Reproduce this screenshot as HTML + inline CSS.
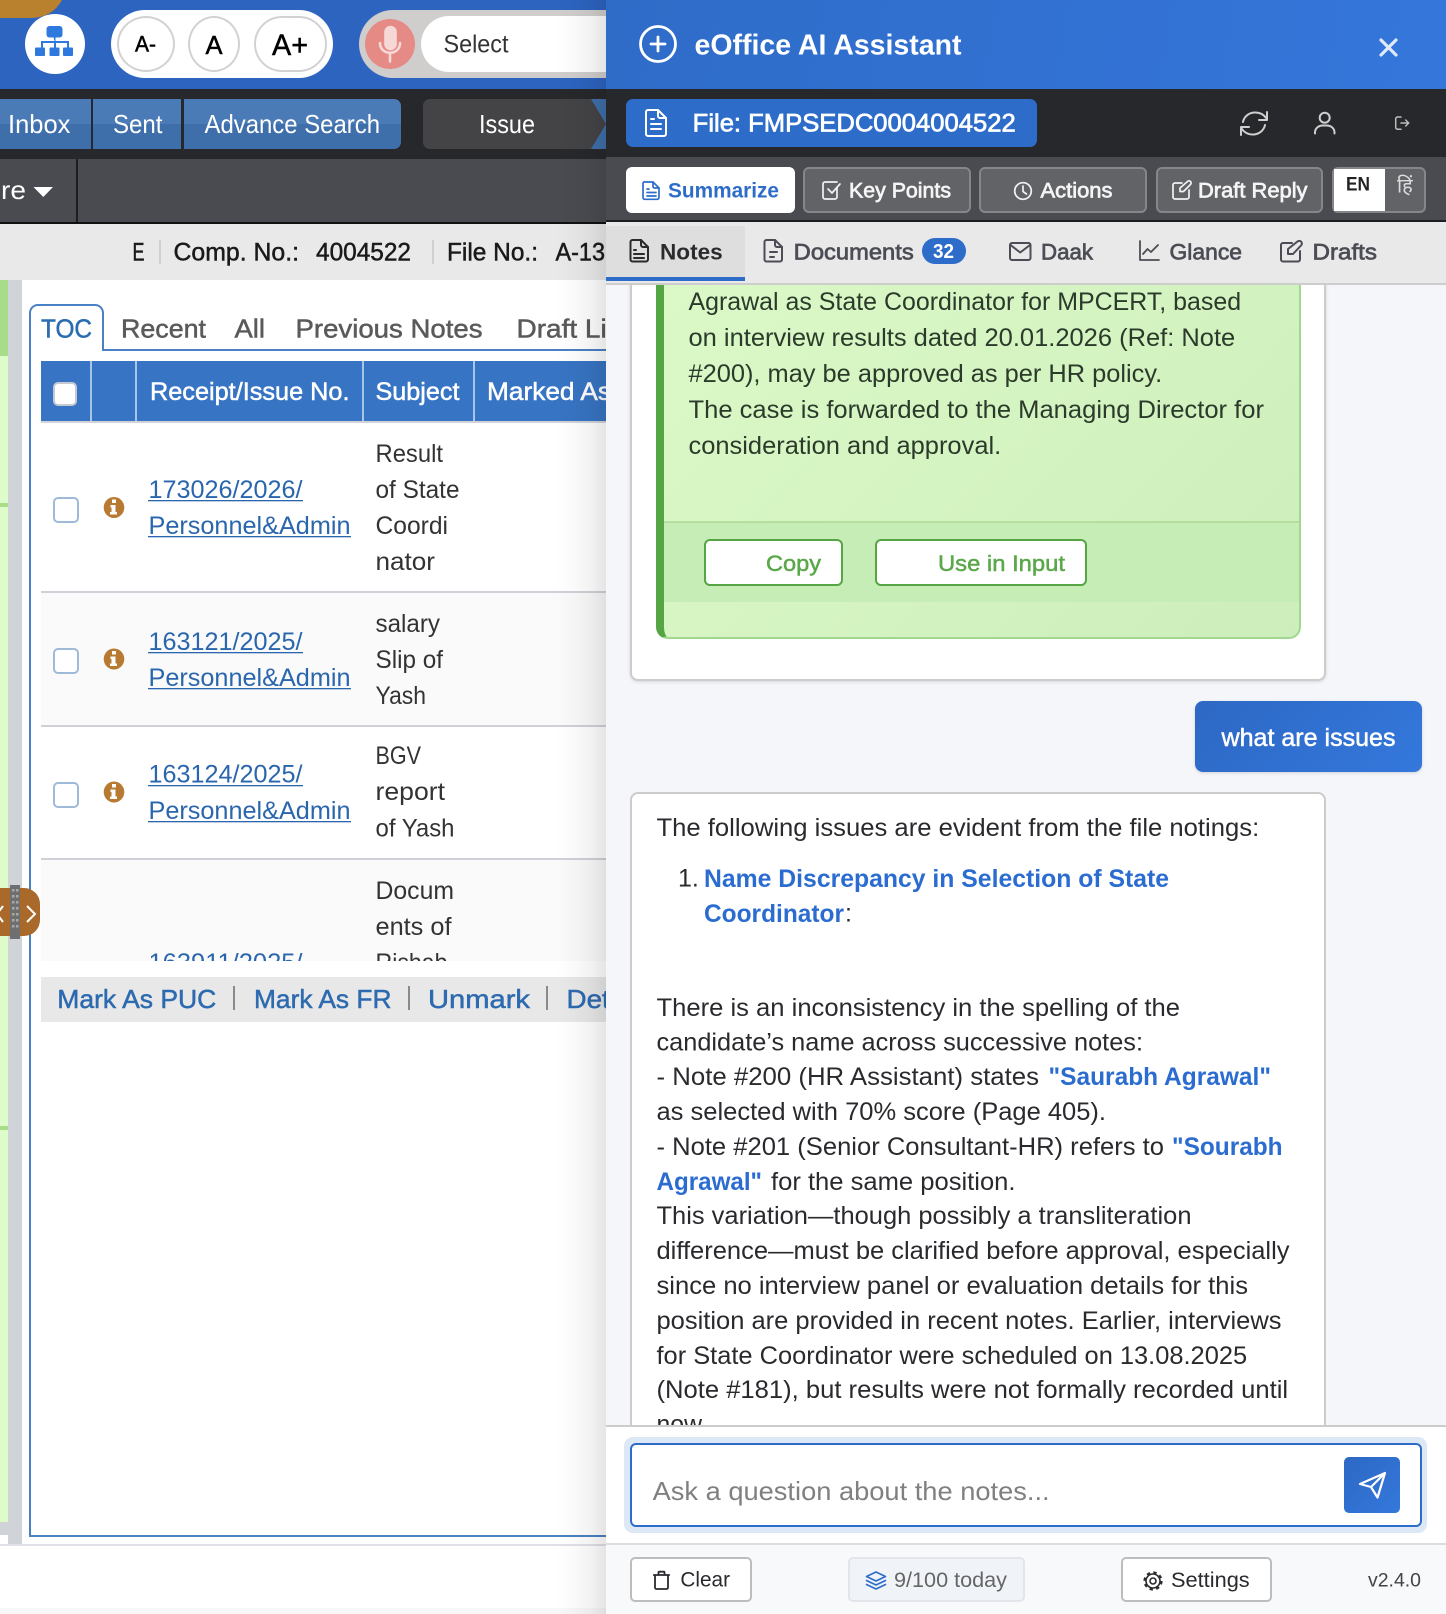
<!DOCTYPE html>
<html lang="en"><head><meta charset="utf-8"><title>eOffice AI Assistant</title>
<style>
html,body{margin:0;padding:0;width:1446px;height:1614px;overflow:hidden;background:#fff}
body{position:relative;font-family:"Liberation Sans",sans-serif}
.a{position:absolute;box-sizing:border-box}
svg.a{overflow:hidden}
text{font-family:"Liberation Sans","Noto Sans CJK SC",sans-serif;white-space:pre}
.m{stroke-width:.5px}
.ic{fill:none;stroke-linecap:round;stroke-linejoin:round}
.cb{width:26px;height:26px;left:53px;border:2px solid #9fbad8;border-radius:5px;background:#fff}
.btn{top:167px;height:46px;border:2px solid #85868a;border-radius:6px;background:#626367}
.fbtn{top:1557px;height:45px;border:2px solid #bdbdbd;border-radius:5px;background:#fff}
</style></head><body>

<!-- LEFT PAGE -->
<div class="a" style="left:0;top:0;width:606px;height:89px;background:#2c64c0"></div>
<div class="a" style="left:25px;top:14px;width:60px;height:60px;border-radius:50%;background:#fff"></div>
<div class="a" style="left:111px;top:10px;width:222px;height:68px;border-radius:34px;background:#fff"></div>
<div class="a" style="left:117px;top:16px;width:58px;height:56px;border-radius:50%;border:2px solid #d2d2d2"></div>
<div class="a" style="left:188px;top:16px;width:52px;height:56px;border-radius:50%;border:2px solid #d2d2d2"></div>
<div class="a" style="left:254px;top:16px;width:73px;height:56px;border-radius:28px;border:2px solid #d2d2d2"></div>
<div class="a" style="left:359px;top:10px;width:300px;height:68px;border-radius:34px;background:#d0cdcd"></div>
<div class="a" style="left:365px;top:19px;width:50px;height:50px;border-radius:50%;background:#e58a84"></div>
<div class="a" style="left:421px;top:16px;width:250px;height:56px;border-radius:28px;background:#fff"></div>

<div class="a" style="left:0;top:89px;width:606px;height:70px;background:#27282b"></div>
<div class="a" style="left:0;top:99px;width:91px;height:50px;background:linear-gradient(#4a7bb6 50%,#3f6fab 50%)"></div>
<div class="a" style="left:93px;top:99px;width:88px;height:50px;background:linear-gradient(#4a7bb6 50%,#3f6fab 50%)"></div>
<div class="a" style="left:184px;top:99px;width:217px;height:50px;border-radius:0 7px 7px 0;background:linear-gradient(#4a7bb6 50%,#3f6fab 50%)"></div>
<div class="a" style="left:591px;top:99px;width:15px;height:50px;background:#3f6fab"></div>
<div class="a" style="left:423px;top:99px;width:183px;height:50px;border-radius:7px 0 0 7px;background:#444446;clip-path:polygon(0 0,168px 0,183px 25px,168px 50px,0 50px)"></div>

<div class="a" style="left:0;top:159px;width:606px;height:63px;background:#4a4b50"></div>
<div class="a" style="left:76px;top:159px;width:2px;height:63px;background:#1d1e21"></div>
<div class="a" style="left:0;top:222px;width:606px;height:2px;background:#111"></div>
<div class="a" style="left:0;top:224px;width:606px;height:56px;background:#e9e9e9"></div>
<div class="a" style="left:159px;top:240px;width:2px;height:24px;background:#cfcfcf"></div>
<div class="a" style="left:432px;top:240px;width:2px;height:24px;background:#cfcfcf"></div>

<div class="a" style="left:0;top:280px;width:8px;height:76px;background:#a8dc88"></div>
<div class="a" style="left:0;top:356px;width:8px;height:1166px;background:#defcc9"></div>
<div class="a" style="left:0;top:503px;width:8px;height:4px;background:#a8dc88"></div>
<div class="a" style="left:0;top:1126px;width:8px;height:4px;background:#a8dc88"></div>
<div class="a" style="left:0;top:1522px;width:8px;height:13px;background:#d0d3d8"></div>
<div class="a" style="left:8px;top:280px;width:14px;height:1264px;background:#d0d3d8"></div>

<div class="a" style="left:29px;top:349px;width:2px;height:1188px;background:#4a80c4"></div>
<div class="a" style="left:29px;top:1535px;width:577px;height:2px;background:#4a80c4"></div>
<div class="a" style="left:100px;top:349px;width:506px;height:2px;background:#4a80c4"></div>
<div class="a" style="left:29px;top:304px;width:75px;height:47px;border:2px solid #4a80c4;border-bottom:0;border-radius:9px 9px 0 0;background:#fff"></div>

<div class="a" style="left:41px;top:361px;width:565px;height:60px;background:#3774c3"></div>
<div class="a" style="left:90px;top:361px;width:2px;height:60px;background:#a8c4e6"></div>
<div class="a" style="left:135px;top:361px;width:2px;height:60px;background:#a8c4e6"></div>
<div class="a" style="left:362px;top:361px;width:2px;height:60px;background:#a8c4e6"></div>
<div class="a" style="left:473px;top:361px;width:2px;height:60px;background:#a8c4e6"></div>
<div class="a" style="left:41px;top:421px;width:565px;height:2px;background:#d0d3d8"></div>
<div class="a" style="left:53px;top:382px;width:24px;height:24px;background:#fff;border:2px solid #c4c9d2;border-radius:5px"></div>

<div class="a" style="left:41px;top:591px;width:565px;height:2px;background:#d0d0d8"></div>
<div class="a" style="left:41px;top:593px;width:565px;height:132px;background:#fafafa"></div>
<div class="a" style="left:41px;top:725px;width:565px;height:2px;background:#d0d0d8"></div>
<div class="a" style="left:41px;top:858px;width:565px;height:2px;background:#d0d0d8"></div>
<div class="a" style="left:41px;top:860px;width:565px;height:101px;background:#fafafa"></div>
<div class="a cb" style="top:497px"></div>
<div class="a cb" style="top:648px"></div>
<div class="a cb" style="top:782px"></div>

<div class="a" style="left:41px;top:977px;width:565px;height:45px;background:#e8e8e8"></div>
<div class="a" style="left:233px;top:986px;width:2px;height:24px;background:#8a8a8a"></div>
<div class="a" style="left:408px;top:986px;width:2px;height:24px;background:#8a8a8a"></div>
<div class="a" style="left:546px;top:986px;width:2px;height:24px;background:#8a8a8a"></div>

<div class="a" style="left:0;top:1544px;width:606px;height:2px;background:#e0e0e8"></div>
<div class="a" style="left:0;top:1608px;width:606px;height:6px;background:#f8f8f8"></div>

<svg class="a" style="left:0;top:0" width="606" height="1614" viewBox="0 0 606 1614">
<defs><clipPath id="r4"><rect x="0" y="860" width="606" height="101"/></clipPath></defs>
<!-- orange corner -->
<path d="M0 0H62Q52 18 30 18H0Z" fill="#b9812e"/>
<!-- sitemap icon -->
<g fill="#2f78de"><rect x="46.500" y="26" width="16" height="11.500" rx="3"/><rect x="35" y="47.500" width="10" height="8.500" rx="1"/><rect x="49.500" y="47.500" width="10" height="8.500" rx="1"/><rect x="63" y="47.500" width="10" height="8.500" rx="1"/><path d="M53.500 37h2v4h13.500v7h-2v-5h-11v5h-2v-5h-11v5h-2v-7h13.500z"/></g>
<g fill="#000" stroke="#000"><text class="m" x="135" y="51.700" font-size="22" textLength="21" lengthAdjust="spacingAndGlyphs">A-</text><text class="m" x="205.500" y="54" font-size="26" textLength="17" lengthAdjust="spacingAndGlyphs">A</text><text class="m" x="272" y="55" font-size="30" textLength="36" lengthAdjust="spacingAndGlyphs">A+</text></g>
<!-- mic -->
<g class="ic" stroke="#f6d9d7" stroke-width="2.600"><rect x="385.500" y="27" width="10" height="22" rx="5" fill="#f6d9d7"/><path d="M380 43c0 13 20 13 20 0M390 53v8.500"/></g>
<text x="443.500" y="52.700" font-size="25" fill="#333" textLength="65" lengthAdjust="spacingAndGlyphs">Select</text>
<g fill="#fff" font-size="26">
<text x="8" y="133" textLength="62.400" lengthAdjust="spacingAndGlyphs">Inbox</text><text x="113" y="133" textLength="49.500" lengthAdjust="spacingAndGlyphs">Sent</text><text x="204.500" y="133" textLength="175.500" lengthAdjust="spacingAndGlyphs">Advance Search</text><text x="479" y="133" textLength="56" lengthAdjust="spacingAndGlyphs">Issue</text><text x="1" y="199" textLength="25" lengthAdjust="spacingAndGlyphs">re</text>
</g>
<path d="M33.500 187h19.500l-9.700 10z" fill="#fff"/>
<g fill="#1a1a1a" stroke="#1a1a1a" font-size="25">
<text class="m" x="132.500" y="260.700" textLength="12" lengthAdjust="spacingAndGlyphs">E</text><text class="m" x="173.500" y="260.700" textLength="125.500" lengthAdjust="spacingAndGlyphs">Comp. No.:</text><text class="m" x="316" y="260.700" textLength="95" lengthAdjust="spacingAndGlyphs">4004522</text><text class="m" x="447" y="260.700" textLength="91" lengthAdjust="spacingAndGlyphs">File No.:</text><text class="m" x="555.500" y="260.700" textLength="49.500" lengthAdjust="spacingAndGlyphs">A-13</text>
</g>
<g font-size="26" fill="#5a5a5a" stroke="#5a5a5a">
<text class="m" x="41" y="337.700" fill="#2a6db0" stroke="#2a6db0" textLength="51" lengthAdjust="spacingAndGlyphs">TOC</text><text class="m" x="121" y="337.700" textLength="85" lengthAdjust="spacingAndGlyphs">Recent</text><text class="m" x="234.500" y="337.700" textLength="30.500" lengthAdjust="spacingAndGlyphs">All</text><text class="m" x="295.500" y="337.700" textLength="187" lengthAdjust="spacingAndGlyphs">Previous Notes</text><text class="m" x="516.500" y="337.700" textLength="112" lengthAdjust="spacingAndGlyphs">Draft List</text>
</g>
<g font-size="25" fill="#fff" stroke="#fff">
<text class="m" x="150" y="400" textLength="199.500" lengthAdjust="spacingAndGlyphs">Receipt/Issue No.</text><text class="m" x="375.500" y="400" textLength="84" lengthAdjust="spacingAndGlyphs">Subject</text><text class="m" x="487" y="400" textLength="124" lengthAdjust="spacingAndGlyphs">Marked As</text>
</g>
<g font-size="25" fill="#333">
<text x="375.500" y="462" textLength="67.500" lengthAdjust="spacingAndGlyphs">Result</text><text x="375.500" y="498" textLength="84" lengthAdjust="spacingAndGlyphs">of State</text><text x="375.500" y="534" textLength="72.500" lengthAdjust="spacingAndGlyphs">Coordi</text><text x="375.500" y="570" textLength="59.500" lengthAdjust="spacingAndGlyphs">nator</text>
<text x="375.500" y="632" textLength="64.500" lengthAdjust="spacingAndGlyphs">salary</text><text x="375.500" y="668" textLength="67.500" lengthAdjust="spacingAndGlyphs">Slip of</text><text x="375.500" y="704" textLength="50.500" lengthAdjust="spacingAndGlyphs">Yash</text>
<text x="375.500" y="764" textLength="45.500" lengthAdjust="spacingAndGlyphs">BGV</text><text x="375.500" y="800" textLength="69.500" lengthAdjust="spacingAndGlyphs">report</text><text x="375.500" y="836.500" textLength="79" lengthAdjust="spacingAndGlyphs">of Yash</text>
<text x="375.500" y="899" textLength="78.500" lengthAdjust="spacingAndGlyphs">Docum</text><text x="375.500" y="935" textLength="76" lengthAdjust="spacingAndGlyphs">ents of</text>
<g clip-path="url(#r4)"><text x="375.500" y="971" textLength="72" lengthAdjust="spacingAndGlyphs">Rishab</text></g>
</g>
<g font-size="25" fill="#2a66ad">
<text x="148.500" y="498" textLength="154" lengthAdjust="spacingAndGlyphs">173026/2026/</text><text x="148.500" y="534" textLength="202" lengthAdjust="spacingAndGlyphs">Personnel&amp;Admin</text>
<text x="148.500" y="650" textLength="154" lengthAdjust="spacingAndGlyphs">163121/2025/</text><text x="148.500" y="686" textLength="202" lengthAdjust="spacingAndGlyphs">Personnel&amp;Admin</text>
<text x="148.500" y="782.700" textLength="154" lengthAdjust="spacingAndGlyphs">163124/2025/</text><text x="148.500" y="819" textLength="202" lengthAdjust="spacingAndGlyphs">Personnel&amp;Admin</text>
<g clip-path="url(#r4)"><text x="148.500" y="971" textLength="154" lengthAdjust="spacingAndGlyphs">163911/2025/</text></g>
</g>
<g fill="#2a66ad">
<rect x="148" y="500" width="155" height="1.300"/><rect x="148" y="536" width="203" height="1.300"/>
<rect x="148" y="652" width="155" height="1.300"/><rect x="148" y="688" width="203" height="1.300"/>
<rect x="148" y="785" width="155" height="1.300"/><rect x="148" y="821" width="203" height="1.300"/>
</g>
<!-- info icons -->
<g id="inf"><ellipse cx="114" cy="507.500" rx="10.300" ry="10.500" fill="#b87a30"/><path d="M112 499.500h4v3.500h-4zM110.500 505h5v7h1.500v2.500h-7V512h1.500v-4.500h-1z" fill="#fff"/></g>
<use href="#inf" y="151.500"/>
<use href="#inf" y="284.500"/>
<g font-size="26" fill="#2d6ab0" stroke="#2d6ab0">
<text class="m" x="57.300" y="1008" textLength="159" lengthAdjust="spacingAndGlyphs">Mark As PUC</text><text class="m" x="254" y="1008" textLength="137.500" lengthAdjust="spacingAndGlyphs">Mark As FR</text><text class="m" x="428" y="1008" textLength="102" lengthAdjust="spacingAndGlyphs">Unmark</text><text class="m" x="566.500" y="1008" textLength="85" lengthAdjust="spacingAndGlyphs">Details</text>
</g>
</svg>

<!-- splitter handle -->
<div class="a" style="left:-20px;top:888px;width:60px;height:48px;border-radius:16px;background:#a9692a"></div>
<div class="a" style="left:10px;top:885px;width:10px;height:54px;background:#6f6f6f"></div>
<svg class="a" style="left:0;top:880px" width="44" height="64" viewBox="0 0 44 64">
<path d="M27 26l8 8-8 8M3 26l-6 8 6 8" fill="none" stroke="#fff" stroke-width="2"/>
<g fill="#a8a8a8"><rect x="12" y="9" width="2.500" height="2.500"/><rect x="16" y="9" width="2.500" height="2.500"/><rect x="12" y="15" width="2.500" height="2.500"/><rect x="16" y="15" width="2.500" height="2.500"/><rect x="12" y="21" width="2.500" height="2.500"/><rect x="16" y="21" width="2.500" height="2.500"/><rect x="12" y="27" width="2.500" height="2.500"/><rect x="16" y="27" width="2.500" height="2.500"/><rect x="12" y="33" width="2.500" height="2.500"/><rect x="16" y="33" width="2.500" height="2.500"/><rect x="12" y="39" width="2.500" height="2.500"/><rect x="16" y="39" width="2.500" height="2.500"/><rect x="12" y="45" width="2.500" height="2.500"/><rect x="16" y="45" width="2.500" height="2.500"/></g>
</svg>
<!-- panel shadow -->
<div class="a" style="left:556px;top:0;width:50px;height:1614px;background:linear-gradient(90deg,rgba(0,0,0,0) 0,rgba(0,0,0,.02) 35%,rgba(0,0,0,.05) 70%,rgba(0,0,0,.105) 100%)"></div>

<!-- RIGHT PANEL -->
<div class="a" style="left:606px;top:0;width:840px;height:1614px;background:#f5f6fa"></div>
<!-- chat -->
<div class="a" style="left:630px;top:200px;width:696px;height:481px;background:#fff;border:2px solid #cccccc;border-radius:8px;box-shadow:0 1px 3px rgba(0,0,0,.12)"></div>
<div class="a" style="left:656px;top:200px;width:645px;height:439px;border:2px solid #a0d890;border-left:8px solid #55a544;border-radius:12px;background:linear-gradient(135deg,#dcfac8,#cdeebb)"></div>
<div class="a" style="left:664px;top:521px;width:635px;height:81px;border-top:2px solid #b5dea0;background:#c6edb6"></div>
<div class="a" style="left:704px;top:539px;width:139px;height:47px;background:#fff;border:2px solid #55a544;border-radius:6px"></div>
<div class="a" style="left:875px;top:539px;width:212px;height:47px;background:#fff;border:2px solid #55a544;border-radius:6px"></div>
<div class="a" style="left:1195px;top:701px;width:227px;height:71px;border-radius:8px;background:linear-gradient(135deg,#2d68c4,#3478dc);box-shadow:0 1px 3px rgba(0,0,0,.15)"></div>
<div class="a" style="left:630px;top:792px;width:696px;height:720px;background:#fff;border:2px solid #cccccc;border-radius:8px"></div>

<svg class="a" style="left:606px;top:0" width="840" height="1614" viewBox="606 0 840 1614">
<defs><clipPath id="ch"><rect x="606" y="285" width="840" height="1140"/></clipPath></defs>
<g clip-path="url(#ch)" font-size="25">
<g fill="#2b3a2b">
<text x="688.500" y="310" textLength="552.600" lengthAdjust="spacingAndGlyphs">Agrawal as State Coordinator for MPCERT, based</text>
<text x="688.500" y="346" textLength="546.700" lengthAdjust="spacingAndGlyphs">on interview results dated 20.01.2026 (Ref: Note</text>
<text x="688.500" y="382" textLength="473.700" lengthAdjust="spacingAndGlyphs">#200), may be approved as per HR policy.</text>
<text x="688.500" y="418" textLength="575.500" lengthAdjust="spacingAndGlyphs">The case is forwarded to the Managing Director for</text>
<text x="688.500" y="454" textLength="312.700" lengthAdjust="spacingAndGlyphs">consideration and approval.</text>
</g>
<g font-size="22.500" fill="#5aa84a" stroke="#5aa84a"><text class="m" x="766" y="571" textLength="55" lengthAdjust="spacingAndGlyphs">Copy</text><text class="m" x="938" y="571" textLength="127" lengthAdjust="spacingAndGlyphs">Use in Input</text></g>
<text x="1221.500" y="746" fill="#fff" stroke="#fff" class="m" textLength="174" lengthAdjust="spacingAndGlyphs">what are issues</text>
<g fill="#2a2a2e">
<text x="656.500" y="836" textLength="602.700" lengthAdjust="spacingAndGlyphs">The following issues are evident from the file notings:</text>
<text x="678" y="886.700">1.</text>
<text x="845" y="921.700">:</text>
<text x="656.500" y="1016" textLength="523.500" lengthAdjust="spacingAndGlyphs">There is an inconsistency in the spelling of the</text>
<text x="656.500" y="1050.500" textLength="486.500" lengthAdjust="spacingAndGlyphs">candidate’s name across successive notes:</text>
<text x="656.500" y="1085" textLength="382.500" lengthAdjust="spacingAndGlyphs">- Note #200 (HR Assistant) states</text>
<text x="656.500" y="1120" textLength="449.500" lengthAdjust="spacingAndGlyphs">as selected with 70% score (Page 405).</text>
<text x="656.500" y="1155" textLength="507.500" lengthAdjust="spacingAndGlyphs">- Note #201 (Senior Consultant-HR) refers to</text>
<text x="771" y="1190" textLength="244.500" lengthAdjust="spacingAndGlyphs">for the same position.</text>
<text x="656.500" y="1224" textLength="535" lengthAdjust="spacingAndGlyphs">This variation—though possibly a transliteration</text>
<text x="656.500" y="1259" textLength="633" lengthAdjust="spacingAndGlyphs">difference—must be clarified before approval, especially</text>
<text x="656.500" y="1294" textLength="591.500" lengthAdjust="spacingAndGlyphs">since no interview panel or evaluation details for this</text>
<text x="656.500" y="1329" textLength="625" lengthAdjust="spacingAndGlyphs">position are provided in recent notes. Earlier, interviews</text>
<text x="656.500" y="1364" textLength="590.600" lengthAdjust="spacingAndGlyphs">for State Coordinator were scheduled on 13.08.2025</text>
<text x="656.500" y="1398" textLength="631.600" lengthAdjust="spacingAndGlyphs">(Note #181), but results were not formally recorded until</text>
<text x="656.500" y="1432.700" textLength="45.500" lengthAdjust="spacingAndGlyphs">now</text>
</g>
<g fill="#2b6cd0" font-weight="bold">
<text x="704" y="887" textLength="465" lengthAdjust="spacingAndGlyphs">Name Discrepancy in Selection of State</text>
<text x="704" y="922" textLength="140" lengthAdjust="spacingAndGlyphs">Coordinator</text>
<text x="1048.500" y="1085" textLength="222.500" lengthAdjust="spacingAndGlyphs">"Saurabh Agrawal"</text>
<text x="1172" y="1155" textLength="110.600" lengthAdjust="spacingAndGlyphs">"Sourabh</text>
<text x="656.500" y="1190" textLength="105.500" lengthAdjust="spacingAndGlyphs">Agrawal"</text>
</g>
</g>
</svg>

<!-- panel top chrome -->
<div class="a" style="left:606px;top:0;width:840px;height:89px;background:linear-gradient(100deg,#2f6cc8,#3576db)"></div>
<div class="a" style="left:606px;top:89px;width:840px;height:68px;background:#27282b"></div>
<div class="a" style="left:626px;top:99px;width:411px;height:48px;border-radius:7px;background:#2d6cc9"></div>
<div class="a" style="left:606px;top:157px;width:840px;height:63px;background:#4a4b50"></div>
<div class="a" style="left:606px;top:220px;width:840px;height:2px;background:#1c1d20"></div>
<div class="a" style="left:626px;top:167px;width:169px;height:46px;border-radius:6px;background:#fff"></div>
<div class="a btn" style="left:803px;width:168px"></div>
<div class="a btn" style="left:979px;width:168px"></div>
<div class="a btn" style="left:1156px;width:167px"></div>
<div class="a btn" style="left:1332px;width:94px"></div>
<div class="a" style="left:1334px;top:169px;width:51px;height:42px;background:#fff"></div>
<div class="a" style="left:606px;top:222px;width:840px;height:61px;background:#e9e9e9"></div>
<div class="a" style="left:606px;top:283px;width:840px;height:2px;background:#cdcdcd"></div>
<div class="a" style="left:606px;top:226px;width:139px;height:51px;background:#dedede"></div>
<div class="a" style="left:606px;top:277px;width:139px;height:4px;background:#2d6cc9"></div>
<div class="a" style="left:922px;top:238px;width:44px;height:26px;border-radius:13px;background:#2d6cc9"></div>

<!-- panel bottom chrome -->
<div class="a" style="left:606px;top:1425px;width:840px;height:2px;background:#cccccc"></div>
<div class="a" style="left:606px;top:1427px;width:840px;height:116px;background:#fff"></div>
<div class="a" style="left:624px;top:1437px;width:803px;height:96px;border-radius:9px;background:#dce8f6"></div>
<div class="a" style="left:630px;top:1443px;width:792px;height:84px;border:2px solid #2d6cc9;border-radius:6px;background:#fff"></div>
<div class="a" style="left:1344px;top:1457px;width:56px;height:56px;border-radius:5px;background:linear-gradient(135deg,#2d68c4,#3478dc)"></div>
<div class="a" style="left:606px;top:1543px;width:840px;height:2px;background:#dddddd"></div>
<div class="a" style="left:606px;top:1545px;width:840px;height:69px;background:#f8f9fb"></div>
<div class="a fbtn" style="left:630px;width:122px"></div>
<div class="a fbtn" style="left:848px;width:177px;background:#f0f3f8;border-color:#e2e5ea"></div>
<div class="a fbtn" style="left:1121px;width:151px"></div>

<svg class="a" style="left:606px;top:0;pointer-events:none" width="840" height="1614" viewBox="606 0 840 1614">
<!-- header -->
<g class="ic" stroke="#fff" stroke-width="2.800"><circle cx="658" cy="44" r="17.500"/><path d="M658 37v14M651 44h14"/></g>
<text x="694.500" y="54.300" font-size="28.500" font-weight="bold" fill="#fff" textLength="267" lengthAdjust="spacingAndGlyphs">eOffice AI Assistant</text>
<path d="M1381 40l15 15M1396 40l-15 15" stroke="#dfe9f8" stroke-width="3.200" stroke-linecap="round"/>
<!-- file -->
<g class="ic" stroke="#fff" stroke-width="2"><path d="M648 110h10l8 8v16a2 2 0 0 1-2 2h-16a2 2 0 0 1-2-2v-22a2 2 0 0 1 2-2z"/><path d="M658 110v6a2 2 0 0 0 2 2h6M651 119h3M651 124h10M651 129h10"/></g>
<text class="m" x="692.700" y="131.700" font-size="25" fill="#fff" stroke="#fff" style="stroke-width:.7px" textLength="323" lengthAdjust="spacingAndGlyphs">File: FMPSEDC0004004522</text>
<g class="ic" stroke="#cfcfcf" stroke-width="2"><path d="M1243 122a12.500 11.500 0 0 1 23-4M1267 112v8h-8M1265 125a12.500 11.500 0 0 1-23 4M1241 135v-8h8"/></g>
<g class="ic" stroke="#cfcfcf" stroke-width="2"><circle cx="1324.700" cy="117.700" r="5"/><path d="M1315 133.500v-1a7.500 7 0 0 1 7.500-7h4.500a7.500 7 0 0 1 7.500 7v1"/></g>
<g class="ic" stroke="#bdbdbd" stroke-width="1.500"><path d="M1401 117h-3.500a1.800 1.800 0 0 0-1.800 1.800v8.600a1.800 1.800 0 0 0 1.800 1.800h3.500M1401 123h7.500M1405.700 120l3 3-3 3"/></g>
<!-- action buttons -->
<g class="ic" stroke="#2d6cc9" stroke-width="1.700"><path d="M645 182h8l6 6v9.500a1.800 1.800 0 0 1-1.800 1.800h-12.400a1.800 1.800 0 0 1-1.800-1.800v-14a1.800 1.800 0 0 1 1.800-1.800z"/><path d="M653 182v4.500a1.500 1.500 0 0 0 1.500 1.500h4.500M647 189h2M647 192.500h9M647 196h9"/></g>
<text x="668" y="197.300" font-size="21" fill="#2d6cc9" font-weight="bold" textLength="111" lengthAdjust="spacingAndGlyphs">Summarize</text>
<g class="ic" stroke="#f2f2f2" stroke-width="1.700"><path d="M837 188v9a2 2 0 0 1-2 2h-10a2 2 0 0 1-2-2v-13a2 2 0 0 1 2-2h12M828 189l4 4 8-9"/></g>
<circle class="ic" cx="1023" cy="191" r="8.300" stroke="#f2f2f2" stroke-width="1.700"/><path class="ic" d="M1023 186v5.500l3.500 2.500" stroke="#f2f2f2" stroke-width="1.700"/>
<g class="ic" stroke="#f2f2f2" stroke-width="1.700"><path d="M1182 183h-7a2 2 0 0 0-2 2v12a2 2 0 0 0 2 2h12a2 2 0 0 0 2-2v-7M1180 188v3.500h3.500l7-7a2 2 0 0 0-3-3z"/></g>
<g font-size="21" fill="#f5f5f5" stroke="#f5f5f5">
<text class="m" style="stroke-width:.7px" x="849" y="197.300" textLength="102" lengthAdjust="spacingAndGlyphs">Key Points</text><text class="m" style="stroke-width:.7px" x="1040.500" y="197.300" textLength="72" lengthAdjust="spacingAndGlyphs">Actions</text><text class="m" style="stroke-width:.7px" x="1198" y="197.300" textLength="109.500" lengthAdjust="spacingAndGlyphs">Draft Reply</text>
</g>
<text x="1346" y="190.700" font-size="19" font-weight="bold" fill="#222" textLength="24" lengthAdjust="spacingAndGlyphs">EN</text>
<text x="1397" y="192.700" font-size="20" fill="#dddddd" style="font-family:'Noto Sans Devanagari','Lohit Devanagari','Liberation Sans',sans-serif">हिं</text>
<!-- tabs -->
<g class="ic" stroke="#2b2b2e" stroke-width="2"><path d="M632.500 240h8.500l7 7v12.500a2 2 0 0 1-2 2h-13.500a2 2 0 0 1-2-2v-17.500a2 2 0 0 1 2-2z"/><path d="M641 240v5a2 2 0 0 0 2 2h5M634 250h2M634 254h10M634 258h10"/></g>
<text x="660" y="259.300" font-size="22.500" font-weight="bold" fill="#2b2b2e" textLength="62.700" lengthAdjust="spacingAndGlyphs">Notes</text>
<g class="ic" stroke="#4b4c55" stroke-width="2"><path d="M766.500 240h8.500l7 7v12.500a2 2 0 0 1-2 2h-13.500a2 2 0 0 1-2-2v-17.500a2 2 0 0 1 2-2z"/><path d="M775 240v5a2 2 0 0 0 2 2h5M770 252h7M770 257h4"/></g>
<g class="ic" stroke="#4b4c55" stroke-width="2"><rect x="1010" y="243" width="20.500" height="17" rx="2"/><path d="M1010.500 245l9.700 7.500 9.800-7.500"/></g>
<g class="ic" stroke="#4b4c55" stroke-width="1.800"><path d="M1140 241v19h19M1143 254l4.500-5 3.500 3 7-7"/></g>
<g class="ic" stroke="#4b4c55" stroke-width="2"><path d="M1292 243h-9a2 2 0 0 0-2 2v14.500a2 2 0 0 0 2 2h15a2 2 0 0 0 2-2V251M1288 249v5h5l8-8.500a2.500 2.500 0 0 0-3.500-4z"/></g>
<g font-size="22.500" fill="#4b4c55" stroke="#4b4c55">
<text class="m" style="stroke-width:.7px" x="793.700" y="259.300" textLength="120" lengthAdjust="spacingAndGlyphs">Documents</text><text class="m" style="stroke-width:.7px" x="1041" y="259.300" textLength="52" lengthAdjust="spacingAndGlyphs">Daak</text><text class="m" style="stroke-width:.7px" x="1169.500" y="259.300" textLength="72.500" lengthAdjust="spacingAndGlyphs">Glance</text><text class="m" style="stroke-width:.7px" x="1312.500" y="259.300" textLength="64.500" lengthAdjust="spacingAndGlyphs">Drafts</text>
</g>
<text x="933" y="258" font-size="20" font-weight="bold" fill="#fff" textLength="21" lengthAdjust="spacingAndGlyphs">32</text>
<!-- input -->
<text x="652.600" y="1500" font-size="26" fill="#808080" textLength="397" lengthAdjust="spacingAndGlyphs">Ask a question about the notes...</text>
<g class="ic" stroke="#fff" stroke-width="2.200"><path d="M1385 1473l-25 11 11 3 6.500 10.500zM1371 1487l14-14"/></g>
<!-- footer -->
<g class="ic" stroke="#2a2a2e" stroke-width="1.800"><path d="M655 1575h13v12.500a1.500 1.500 0 0 1-1.500 1.500h-10a1.500 1.500 0 0 1-1.500-1.500zM653.800 1575h15.400M658.500 1575v-2.500a.8.8 0 0 1 .8-.8h4.400a.8.8 0 0 1 .8.8v2.500"/></g>
<text x="680.400" y="1586.700" font-size="21" fill="#2a2a2e" textLength="49.600" lengthAdjust="spacingAndGlyphs">Clear</text>
<g class="ic" stroke="#2d6cc9" stroke-width="1.600"><path d="M876 1572l9.500 4.500-9.500 4.500-9.500-4.500zM866.500 1580.500l9.500 4.500 9.500-4.500M866.500 1584.500l9.500 4.500 9.500-4.500"/></g>
<text x="894" y="1587" font-size="21" fill="#666" textLength="113" lengthAdjust="spacingAndGlyphs">9/100 today</text>
<g fill="none" stroke="#2a2a2e"><circle cx="1153" cy="1581" r="3" stroke-width="1.600"/><circle cx="1153" cy="1581" r="7" stroke-width="1.600"/><circle cx="1153" cy="1581" r="8.600" stroke-width="2" stroke-dasharray="3.400 3.360"/></g>
<text x="1171" y="1587" font-size="21" fill="#2a2a2e" textLength="78.700" lengthAdjust="spacingAndGlyphs">Settings</text>
<text x="1368" y="1586.700" font-size="19" fill="#444" textLength="53" lengthAdjust="spacingAndGlyphs">v2.4.0</text>
</svg>
</body></html>
